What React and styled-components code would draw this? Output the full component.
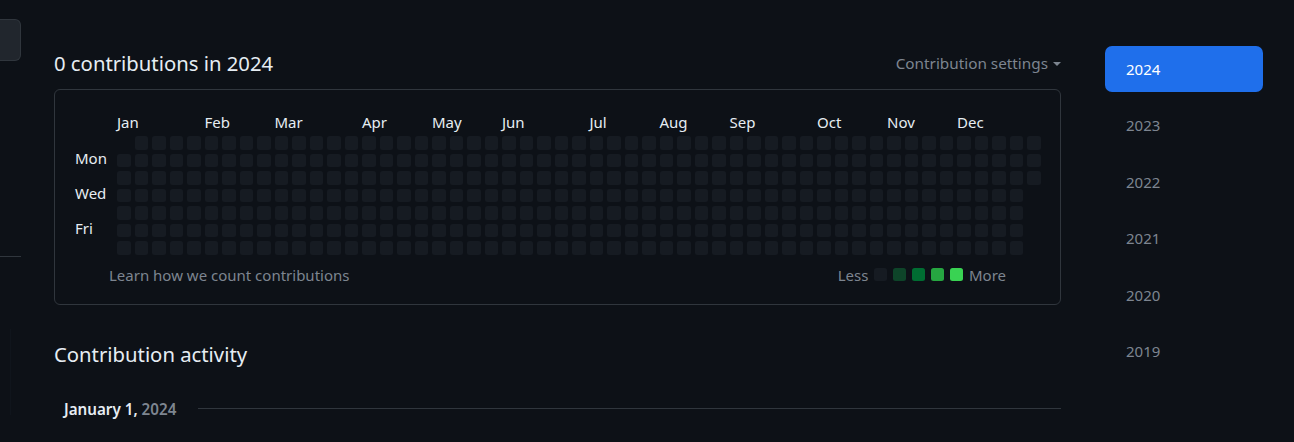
import React from "react";
import styled, { createGlobalStyle } from "styled-components";

const GlobalStyle = createGlobalStyle`
  body {
    margin: 0;
    background: #0d1117;
    color: #e6edf3;
    font-family: "Noto Sans", "Liberation Sans", sans-serif;
  }
`;

const Page = styled.div`
  display: flex;
  align-items: flex-start;
  height: 442px;
  overflow: hidden;
`;

const Rail = styled.div`
  width: 21px;
  flex-shrink: 0;
  display: flex;
  flex-direction: column;
  padding-top: 19px;
`;

const RailButton = styled.div`
  height: 40px;
  background: #21262d;
  border: 1px solid #30363d;
  border-left: none;
  border-radius: 0 6px 6px 0;
`;

const RailRule = styled.div`
  margin-top: 195px;
  border-top: 1px solid #30363d;
`;

const RailTrace = styled.div`
  margin: 72px 0 0 10px;
  width: 1px;
  height: 86px;
  background: #10151c;
`;

const Main = styled.div`
  width: 1007px;
  margin-left: 33px;
  padding-top: 47px;
  flex-shrink: 0;
`;

const Header = styled.div`
  display: flex;
  align-items: center;
  justify-content: space-between;
  height: 32px;
  margin-bottom: 10px;
`;

const Title = styled.h2`
  margin: 0;
  font-size: 20.3px;
  font-weight: 400;
  line-height: 32px;
  color: #e6edf3;
`;

const SettingsToggle = styled.div`
  display: flex;
  align-items: center;
  gap: 5px;
  font-size: 15.3px;
  color: #7d8590;
`;

const Caret = styled.span`
  width: 0;
  height: 0;
  border-left: 4.5px solid transparent;
  border-right: 4.5px solid transparent;
  border-top: 4.5px solid #7d8590;
  margin-top: 2px;
`;

const CalendarBox = styled.div`
  border: 1px solid #30363d;
  border-radius: 6px;
  padding: 22px 20px 19px 20px;
`;

const Calendar = styled.div`
  display: grid;
  grid-template-columns: 38px auto;
  grid-template-rows: 20px auto;
  gap: 4px;
`;

const Months = styled.div`
  grid-column: 2;
  grid-row: 1;
  display: grid;
  grid-template-columns: repeat(53, 13.5px);
  column-gap: 4px;
  align-items: center;
`;

const MonthLabel = styled.span`
  grid-column: ${(p) => p.$col + 1} / span 4;
  grid-row: 1;
  font-size: 15px;
  white-space: nowrap;
  color: #e6edf3;
`;

const Days = styled.div`
  grid-column: 1;
  grid-row: 2;
  display: grid;
  grid-template-rows: repeat(7, 13.5px);
  row-gap: 4px;
`;

const DayLabel = styled.span`
  font-size: 15px;
  line-height: 13.5px;
  margin-top: -2px;
  white-space: nowrap;
  color: #e6edf3;
`;

const Cells = styled.div`
  grid-column: 2;
  grid-row: 2;
  display: grid;
  grid-auto-flow: column;
  grid-template-rows: repeat(7, 13.5px);
  grid-auto-columns: 13.5px;
  gap: 4px;
`;

const Cell = styled.span`
  border-radius: 2.5px;
  background: ${(p) => p.$color || "#161b22"};
  visibility: ${(p) => (p.$empty ? "hidden" : "visible")};
`;

const Footer = styled.div`
  display: flex;
  align-items: center;
  justify-content: space-between;
  margin: 10px 34px 0 34px;
  height: 20px;
  font-size: 15px;
  color: #7d8590;
`;

const Legend = styled.div`
  display: flex;
  align-items: center;
  gap: 5.5px;
`;

const Swatch = styled.span`
  width: 13.5px;
  height: 13.5px;
  border-radius: 2.5px;
  background: ${(p) => p.$color};
`;

const SectionTitle = styled.h2`
  margin: 33px 0 0 0;
  font-size: 20.3px;
  font-weight: 400;
  line-height: 32px;
  color: #e6edf3;
`;

const DateRow = styled.div`
  display: flex;
  align-items: center;
  gap: 22px;
  margin-top: 29px;
  padding-left: 10px;
`;

const DateText = styled.h3`
  margin: 0;
  font-size: 15.2px;
  font-weight: 600;
  white-space: nowrap;
  color: #e6edf3;
`;

const Muted = styled.span`
  color: #7d8590;
`;

const DateRule = styled.div`
  flex: 1;
  border-top: 1px solid #30363d;
`;

const Years = styled.nav`
  width: 158px;
  margin-left: 44px;
  padding-top: 46px;
  display: flex;
  flex-direction: column;
  gap: 10.6px;
`;

const YearLink = styled.a`
  display: flex;
  align-items: center;
  height: 46px;
  padding-left: 21px;
  border-radius: 7px;
  font-size: 15px;
  line-height: 1;
  text-decoration: none;
  color: ${(p) => (p.$active ? "#ffffff" : "#7d8590")};
  background: ${(p) => (p.$active ? "#1f6feb" : "transparent")};
`;

const months = [
  ["Jan", 0], ["Feb", 5], ["Mar", 9], ["Apr", 14], ["May", 18], ["Jun", 22],
  ["Jul", 27], ["Aug", 31], ["Sep", 35], ["Oct", 40], ["Nov", 44], ["Dec", 48],
];

const dayNames = ["", "Mon", "", "Wed", "", "Fri", ""];

const legend = ["#161b22", "#0e4429", "#006d32", "#26a641", "#39d353"];

const years = ["2024", "2023", "2022", "2021", "2020", "2019"];

// 53 weeks, week 0 starts Sunday Dec 31 2023, year ends Tuesday Dec 31 2024
const cells = Array.from({ length: 53 * 7 }, (_, i) => {
  const week = Math.floor(i / 7);
  const day = i % 7;
  const empty = (week === 0 && day === 0) || (week === 52 && day > 2);
  return { key: i, empty };
});

export default function App() {
  return (
    <>
      <GlobalStyle />
      <Page>
        <Rail>
          <RailButton />
          <RailRule />
          <RailTrace />
        </Rail>
        <Main>
          <Header>
            <Title>0 contributions in 2024</Title>
            <SettingsToggle>
              Contribution settings
              <Caret />
            </SettingsToggle>
          </Header>
          <CalendarBox>
            <Calendar>
              <Months>
                {months.map(([name, col]) => (
                  <MonthLabel key={name} $col={col}>{name}</MonthLabel>
                ))}
              </Months>
              <Days>
                {dayNames.map((d, i) => (
                  <DayLabel key={i}>{d}</DayLabel>
                ))}
              </Days>
              <Cells>
                {cells.map((c) => (
                  <Cell key={c.key} $empty={c.empty} />
                ))}
              </Cells>
            </Calendar>
            <Footer>
              <span>Learn how we count contributions</span>
              <Legend>
                Less
                {legend.map((c) => (
                  <Swatch key={c} $color={c} />
                ))}
                More
              </Legend>
            </Footer>
          </CalendarBox>
          <SectionTitle>Contribution activity</SectionTitle>
          <DateRow>
            <DateText>
              January 1, <Muted>2024</Muted>
            </DateText>
            <DateRule />
          </DateRow>
        </Main>
        <Years>
          {years.map((y, i) => (
            <YearLink key={y} $active={i === 0}>{y}</YearLink>
          ))}
        </Years>
      </Page>
    </>
  );
}
